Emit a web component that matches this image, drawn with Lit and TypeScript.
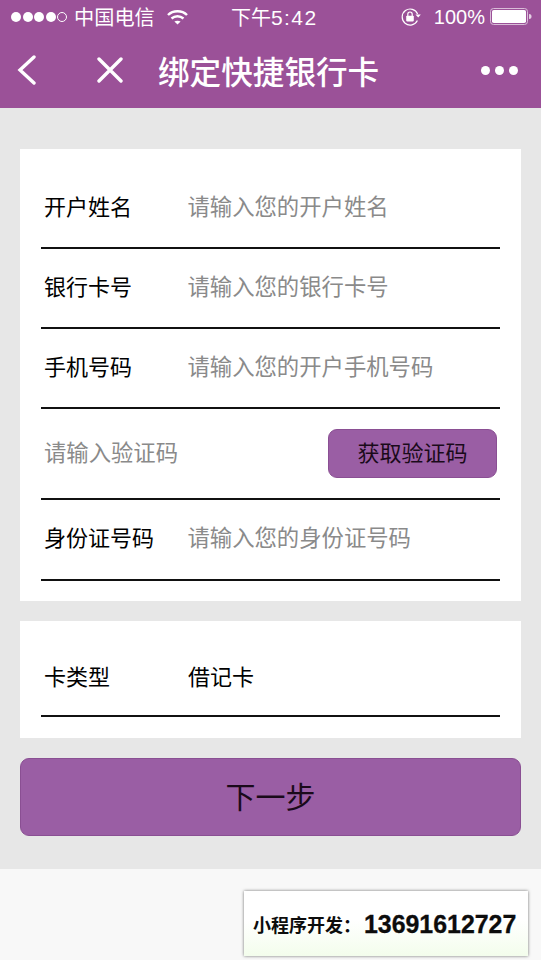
import { LitElement, html, css } from "lit";
import { customElement } from "lit/decorators.js";

const rows = [
  ["开户姓名", "请输入您的开户姓名"],
  ["银行卡号", "请输入您的银行卡号"],
  ["手机号码", "请输入您的开户手机号码"],
];

@customElement("app-root")
export class AppRoot extends LitElement {
  static styles = css`
    :host {
      display: block;
      position: relative;
      width: 541px;
      height: 960px;
      overflow: hidden;
      background: #e7e7e7;
      font-family: "Noto Sans CJK SC", "Liberation Sans", sans-serif;
      color: #000;
    }
    .header { background: #9b5198; color: #fff; height: 108px; display: flex; flex-direction: column; }
    .status { height: 34px; display: flex; align-items: center; padding: 0 9px 0 11px; box-sizing: border-box; position: relative; }
    .dots { display: flex; gap: 1.5px; margin-right: 7px; }
    .dot { width: 10px; height: 10px; border-radius: 50%; background: #fff; box-sizing: border-box; }
    .dot.off { background: none; border: 1px solid #fff; }
    .carrier { font-size: 20.2px; line-height: 34px; }
    .wifi { margin-left: 12px; }
    .time { position: absolute; left: 231px; font-size: 20px; line-height: 34px; white-space: nowrap; }
    .time b { font-weight: 400; font-family: "Liberation Sans", sans-serif; font-size: 21px; letter-spacing: 1.4px; }
    .right { margin-left: auto; display: flex; align-items: center; font-family: "Liberation Sans", sans-serif; font-size: 20px; }
    .right span { margin: 0 5px 0 13px; }
    .nav { flex: 1; display: flex; align-items: center; position: relative; padding-bottom: 2px; }
    .back { margin-left: 17px; display: block; }
    .close { margin-left: 60px; display: block; }
    .title { margin-left: 35px; font-size: 31.6px; line-height: 40px; font-weight: 500; white-space: nowrap; }
    .more { margin-left: auto; margin-right: 23px; display: flex; gap: 5px; }
    .more i { width: 9px; height: 9px; background: #fff; border-radius: 50%; display: block; }

    .content { padding: 41px 20px 0; display: flex; flex-direction: column; }
    .card { background: #fff; padding: 20px 21px 20px; }
    .card.second { margin-top: 20px; padding: 16px 21px 21px; }
    .row { height: 80px; border-bottom: 2px solid #111; box-sizing: border-box; display: flex; align-items: center; padding: 0 3px 7px; font-size: 22px; }
    .second .row { padding-bottom: 3px; }
    .row.code { height: 91px; justify-content: space-between; padding-bottom: 1px; }
    .row.code .ph { margin-bottom: 4px; margin-left: 0; }
    .row.short { height: 81px; }
    .label { width: 144px; flex: none; }
    .ph { color: #8a8a8a; font-size: 22.35px; margin-left: -0.5px; }
    .code-btn { width: 169px; height: 49px; background: #9a5ea4; border: 1px solid #8a4f93; border-radius: 9px; box-sizing: border-box; display: flex; align-items: center; justify-content: center; font-size: 22px; color: #1a0a1a; padding-bottom: 4px; }
    .next { margin-top: 20px; height: 78px; background: #9a5ea4; border: 1px solid #8a4f93; border-radius: 9px; box-sizing: border-box; display: flex; align-items: center; justify-content: center; font-size: 30px; color: #1a0a1a; padding-bottom: 4px; }

    .footer { position: absolute; left: 0; right: 0; top: 869px; bottom: 0; background: #f8f8f8; }
    .ad { position: absolute; left: 244px; top: 891px; width: 284px; height: 65px; box-shadow: 0 0 3px rgba(0,0,0,0.55); background: linear-gradient(#ffffff 45%, #f3fdec); display: flex; align-items: center; padding: 1px 0 0 9px; box-sizing: border-box; font-weight: 700; color: #0c0c0c; white-space: nowrap; }
    .ad .a { font-size: 18px; }
    .ad .b { font-size: 24.9px; font-family: "Liberation Sans", sans-serif; margin-left: 3px; -webkit-text-stroke: 0.3px #0c0c0c; }
  `;

  render() {
    return html`
      <div class="header">
        <div class="status">
          <div class="dots">
            <div class="dot"></div><div class="dot"></div><div class="dot"></div><div class="dot"></div><div class="dot off"></div>
          </div>
          <div class="carrier">中国电信</div>
          <svg class="wifi" width="21" height="16" viewBox="0 0 21 16" fill="none" stroke="#fff" stroke-width="2.4">
            <path d="M1 6 C6 1 15 1 20 6" />
            <path d="M4.5 9.5 C8 6.5 13 6.5 16.5 9.5" />
            <path d="M10.5 15.5 L7.4 12.6 C9 11.3 12 11.3 13.6 12.6 Z" fill="#fff" stroke="none" />
          </svg>
          <div class="time">下午<b>5:42</b></div>
          <div class="right">
            <svg width="20" height="18" viewBox="0 0 20 18" fill="none">
              <path d="M16.4 12.5 A8 8 0 1 1 16.6 6" stroke="#fff" stroke-width="1.2" />
              <path d="M14.5 6.5 L19.8 6.5 L17.2 9.6 Z" fill="#fff" />
              <rect x="5.2" y="7.8" width="7.6" height="5.6" rx="0.8" fill="#fff" />
              <path d="M6.8 8 V6.2 A2.2 2.2 0 0 1 11.2 6.2 V8" stroke="#fff" stroke-width="1.2" />
            </svg>
            <span>100%</span>
            <svg width="42" height="18" viewBox="0 0 42 18" fill="none">
              <rect x="0.5" y="0.5" width="37" height="16" rx="3" stroke="#d9bcd8" />
              <rect x="2" y="2" width="34" height="13" rx="1.8" fill="#fff" />
              <path d="M39 6 C41 6 41.5 7 41.5 8.5 C41.5 10 41 11 39 11 Z" fill="#e4cfe3" />
            </svg>
          </div>
        </div>
        <div class="nav">
          <svg class="back" width="20" height="30" viewBox="0 0 20 30" fill="none" stroke="#fff" stroke-width="3.4" stroke-linecap="round">
            <path d="M17 2 L3 15 L17 28" />
          </svg>
          <svg class="close" width="26" height="26" viewBox="0 0 26 26" fill="none" stroke="#fff" stroke-width="3.4" stroke-linecap="round">
            <path d="M2 2 L24 24 M24 2 L2 24" />
          </svg>
          <div class="title">绑定快捷银行卡</div>
          <div class="more"><i></i><i></i><i></i></div>
        </div>
      </div>

      <div class="content">
        <div class="card">
          ${rows.map(
            ([l, p]) => html`<div class="row"><div class="label">${l}</div><div class="ph">${p}</div></div>`
          )}
          <div class="row code"><div class="ph">请输入验证码</div><div class="code-btn">获取验证码</div></div>
          <div class="row short"><div class="label">身份证号码</div><div class="ph">请输入您的身份证号码</div></div>
        </div>
        <div class="card second">
          <div class="row"><div class="label">卡类型</div><div>借记卡</div></div>
        </div>
        <div class="next">下一步</div>
      </div>

      <div class="footer"></div>
      <div class="ad"><span class="a">小程序开发：</span><span class="b">13691612727</span></div>
    `;
  }
}
